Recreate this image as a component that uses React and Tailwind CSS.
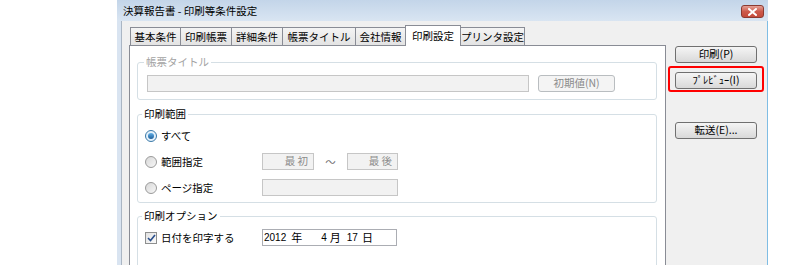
import React from "react";

const tabs = [
    { label: "基本条件", w: "w-[51px]" },
    { label: "印刷帳票", w: "w-[52px]" },
    { label: "詳細条件", w: "w-[52px]" },
    { label: "帳票タイトル", w: "w-[74px]" },
    { label: "会社情報", w: "w-[51px]" },
    { label: "印刷設定", w: "w-[56px]", active: true },
    { label: "プリンタ設定", w: "w-[65px]" },
];

function Button({ children, disabled, className = "" }) {
    return (
        <div
            className={`h-[17px] shrink-0 flex items-center justify-center rounded-[3px] border text-[10.5px] leading-none ${
                disabled
                    ? "border-[#b9bdc0] bg-[#f4f4f4] text-[#8a8a8a]"
                    : "border-[#707070] bg-linear-to-b from-[#f5f5f5] to-[#d9d9d9] text-black"
            } ${className}`}
        >
            {children}
        </div>
    );
}

function Radio({ checked }) {
    return checked ? (
        <div className="w-[12px] h-[12px] rounded-full border border-[#3b79a8] bg-[#e4f1fb] flex items-center justify-center">
            <div className="w-[6px] h-[6px] rounded-full bg-linear-to-b from-[#62b0e8] to-[#1d5f9a]" />
        </div>
    ) : (
        <div className="w-[12px] h-[12px] rounded-full border border-[#9a9a9a] bg-linear-to-br from-[#d8d8d8] to-[#f7f7f7]" />
    );
}

function Field({ children, className = "" }) {
    return (
        <div className={`h-[17px] border border-[#c6c6c6] bg-[#f2f2f2] text-[10.5px] leading-none text-[#8c8c8c] flex items-center justify-end pr-[5px] ${className}`}>
            {children}
        </div>
    );
}

function Group({ label, disabled, className = "", children }) {
    return (
        <fieldset className={`shrink-0 border border-[#d5dfe5] rounded-[3px] ${className}`}>
            <legend className={`ml-[-3px] px-[2px] text-[10.5px] leading-[16px] ${disabled ? "text-[#a3a3a3]" : "text-black"}`}>
                {label}
            </legend>
            {children}
        </fieldset>
    );
}

export default function App() {
    return (
        <div className="w-[800px] h-[265px] bg-white overflow-hidden flex items-start font-['Noto_Sans_CJK_JP','Liberation_Sans',sans-serif]">
            <div className="ml-[117px] w-[651px] shrink-0 flex flex-col">

                {/* Title bar */}
                <div className="h-[21px] shrink-0 flex items-center justify-between pl-[6px] pr-[4px] bg-linear-to-b from-[#c3d5e9] to-[#d9e5f2]">
                    <span className="text-[10.5px] text-black">決算報告書 - 印刷等条件設定</span>
                    <div className="w-[23px] h-[13px] mt-[2px] rounded-[3px] border border-[#8b3a30] bg-linear-to-b from-[#e3a095] via-[#cd5a4b] to-[#c44a3a] flex items-center justify-center">
                        <svg width="9" height="8" viewBox="0 0 9 8">
                            <path d="M1 1 L8 7 M8 1 L1 7" stroke="#fff" strokeWidth="2" strokeLinecap="square" />
                        </svg>
                    </div>
                </div>

                {/* Body */}
                <div className="shrink-0 flex border-l-[4px] border-[#d9e4f1]">
                    <div className="flex-1 flex border-l border-r border-l-[#aab6c4] border-r-[#7fbde4] bg-[#f0f0f0] pl-[7px] pr-[3px]">

                        {/* Tabs + panel */}
                        <div className="w-[537px] shrink-0 flex flex-col pt-[4px]">
                            <div className="h-[20px] shrink-0 flex items-end pl-[1px]">
                                {tabs.map((t, i) =>
                                    t.active ? (
                                        <div
                                            key={i}
                                            className={`${t.w} -ml-px h-[21px] -mb-px relative z-10 border border-b-0 border-[#898c95] bg-white flex items-center justify-center text-[10.5px] text-black`}
                                        >
                                            {t.label}
                                        </div>
                                    ) : (
                                        <div
                                            key={i}
                                            className={`${t.w} ${i === 0 ? "" : "-ml-px"} h-[18px] border border-b-0 border-[#898c95] bg-linear-to-b from-[#f4f4f4] to-[#e3e3e3] flex items-center justify-center text-[10.5px] text-black`}
                                        >
                                            {t.label}
                                        </div>
                                    )
                                )}
                            </div>

                            <div className="h-[240px] shrink-0 border border-[#898c95] bg-white pt-[8px] pl-[7px] pr-[8px] flex flex-col">

                                {/* 帳票タイトル */}
                                <Group label="帳票タイトル" disabled className="pl-[9px] pt-[5px] pb-[7px]">
                                    <div className="flex gap-[9px]">
                                        <div className="w-[382px] h-[17px] border border-[#c6c6c6] bg-[#f2f2f2]" />
                                        <Button disabled className="w-[77px]">初期値(N)</Button>
                                    </div>
                                </Group>

                                {/* 印刷範囲 */}
                                <Group label="印刷範囲" className="mt-[6px] pl-[7px] pt-[5px] pb-[6px]">
                                    <div className="flex flex-col gap-[9px] text-[10.5px] text-black">
                                        <div className="h-[17px] flex items-center gap-[4px]">
                                            <Radio checked />
                                            <span>すべて</span>
                                        </div>
                                        <div className="h-[17px] flex items-center">
                                            <div className="w-[117px] flex items-center gap-[4px]">
                                                <Radio />
                                                <span>範囲指定</span>
                                            </div>
                                            <Field className="w-[52px]">最 初</Field>
                                            <span className="w-[33px] text-center text-[#707070]">～</span>
                                            <Field className="w-[51px]">最 後</Field>
                                        </div>
                                        <div className="h-[17px] flex items-center">
                                            <div className="w-[117px] flex items-center gap-[4px]">
                                                <Radio />
                                                <span>ページ指定</span>
                                            </div>
                                            <Field className="w-[136px]" />
                                        </div>
                                    </div>
                                </Group>

                                {/* 印刷オプション */}
                                <Group label="印刷オプション" className="mt-[5px] h-[80px] pl-[7px] pt-[5px]">
                                    <div className="h-[17px] flex items-center text-[10.5px] text-black">
                                        <div className="w-[117px] flex items-center gap-[4px]">
                                            <div className="w-[12px] h-[12px] border border-[#8e8f8f] bg-linear-to-br from-[#e2e2e2] to-[#fbfbfb] flex items-center justify-center">
                                                <svg width="9" height="8" viewBox="0 0 9 8">
                                                    <path d="M1 4 L3.5 6.5 L8 1" fill="none" stroke="#2a4f8c" strokeWidth="1.6" />
                                                </svg>
                                            </div>
                                            <span>日付を印字する</span>
                                        </div>
                                        <div className="w-[135px] h-[17px] border border-[#abadb3] bg-white flex items-center text-[11px] leading-none">
                                            <span className="ml-[1px] font-['Liberation_Sans',sans-serif] text-[10px]">2012</span>
                                            <span className="ml-[5px]">年</span>
                                            <span className="ml-[19px] font-['Liberation_Sans',sans-serif] text-[10px]">4</span>
                                            <span className="ml-[3px]">月</span>
                                            <span className="ml-[6px] font-['Liberation_Sans',sans-serif] text-[10px]">17</span>
                                            <span className="ml-[4px]">日</span>
                                        </div>
                                    </div>
                                </Group>
                            </div>
                        </div>

                        {/* Right buttons */}
                        <div className="ml-[2px] w-[96px] shrink-0 flex flex-col items-center pt-[25px]">
                            <Button className="w-[82px]">印刷(P)</Button>
                            <div className="mt-[3px] w-[96px] h-[26px] shrink-0 border-2 border-[#ff0000] rounded-[3px] flex flex-col items-center pt-[4px]">
                                <Button className="w-[82px]">ﾌﾟﾚﾋﾞｭｰ(I)</Button>
                            </div>
                            <Button className="mt-[30px] w-[82px]">転送(E)...</Button>
                        </div>
                    </div>
                </div>
            </div>
        </div>
    );
}
